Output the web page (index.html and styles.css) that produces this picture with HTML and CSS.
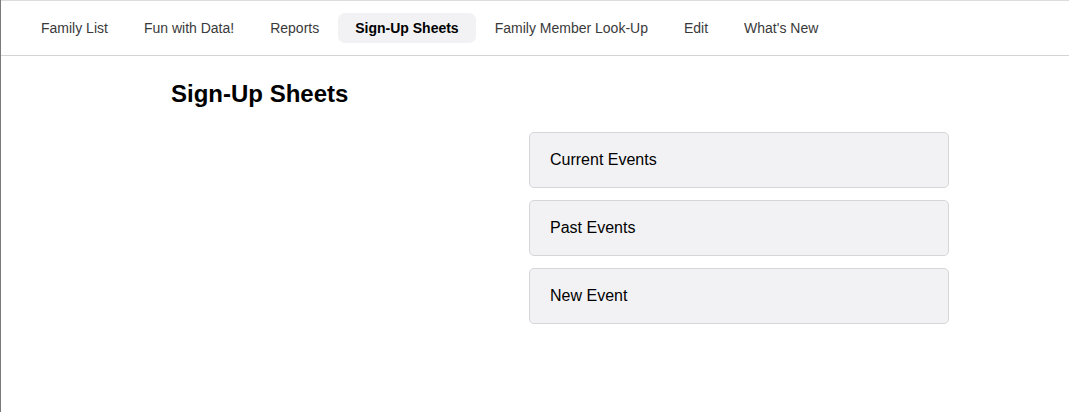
FILE: index.html
```html
<!DOCTYPE html>
<html lang="en">
<head>
  <meta charset="UTF-8" />
  <meta name="viewport" content="width=device-width, initial-scale=1.0"/>
  <title>Sign-Up Sheets</title>
  <link rel="stylesheet" href="styles.css">
</head>
<body>

  <!-- Top navigation -->
  <nav class="topnav">
    <a class="nav-item" href="#">Family List</a>
    <a class="nav-item" href="#">Fun with Data!</a>
    <a class="nav-item" href="#">Reports</a>
    <a class="nav-item active" href="#">Sign-Up Sheets</a>
    <a class="nav-item" href="#">Family Member Look-Up</a>
    <a class="nav-item" href="#">Edit</a>
    <a class="nav-item" href="#">What's New</a>
  </nav>

  <!-- Page content -->
  <main class="content">
    <h1>Sign-Up Sheets</h1>
    <div class="sheets">
      <div class="spacer"></div>
      <div class="sheet-list">
        <a class="sheet-card" href="#">Current Events</a>
        <a class="sheet-card" href="#">Past Events</a>
        <a class="sheet-card" href="#">New Event</a>
      </div>
    </div>
  </main>

</body>
</html>
```

FILE: styles.css
```css
body {
  margin: 0;
  font-family: "Liberation Sans", Arial, sans-serif;
  background: #ffffff;
  color: #000;
  height: 100vh;
  border-left: 1px solid #7a7a7a;
  box-sizing: border-box;
}

.topnav {
  display: flex;
  align-items: center;
  padding: 12px 22px;
  border-top: 1px solid #dcdcdc;
  border-bottom: 1px solid #d4d4d4;
}

.nav-item {
  display: block;
  height: 30px;
  line-height: 30px;
  margin: 0 1px;
  padding: 0 17px;
  font-size: 14px;
  color: #3a3a3a;
  text-decoration: none;
  border-radius: 7px;
}

.nav-item.active {
  background: #f2f2f4;
  color: #000;
  font-weight: bold;
}

.content {
  padding: 0 120px 0 170px;
}

h1 {
  font-size: 24px;
  font-weight: bold;
  margin: 24px 0 24px;
  line-height: 28px;
}

.sheets {
  display: grid;
  grid-template-columns: 1fr 420px;
}

.sheet-list {
  display: flex;
  flex-direction: column;
  gap: 12px;
}

.sheet-card {
  display: block;
  height: 54px;
  line-height: 54px;
  padding: 0 20px;
  background: #f2f2f4;
  border: 1px solid #d6d6d9;
  border-radius: 5px;
  color: #000;
  font-size: 16px;
  text-decoration: none;
}
```
